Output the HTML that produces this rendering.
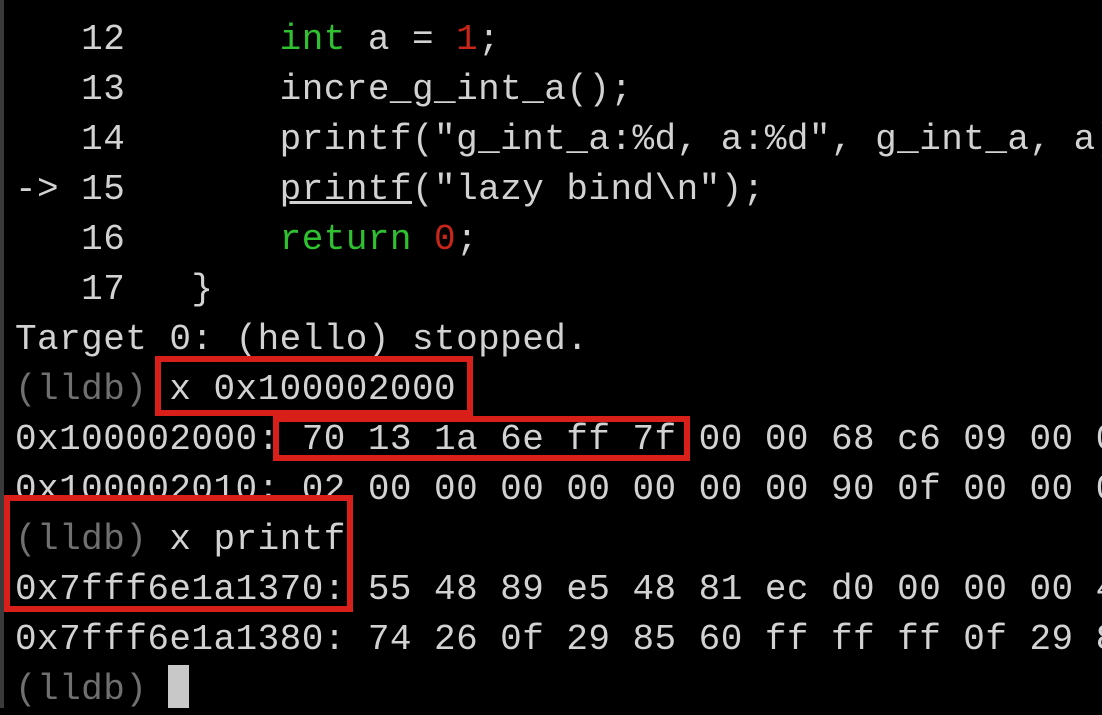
<!DOCTYPE html><html><head><style>
body{margin:0;width:1102px;height:708px;background:#000;overflow:hidden;position:relative;font-family:"Liberation Mono","DejaVu Sans Mono",monospace;}
.l{position:absolute;left:15px;font-size:36px;letter-spacing:0.45px;line-height:50px;height:50px;white-space:pre;color:#d2d2d2;}
.g{color:#2fc12f}.r{color:#c8261b}.d{color:#707070}.y{color:#c8c832}
.bx{position:absolute;border:6px solid #d81f1a;box-sizing:border-box;}
#bar{position:absolute;left:0;top:0;width:4px;height:708px;background:#3a3a3a}
</style></head><body>
<div id="bar"></div>
<div class="l y" style="top:-37px">:15:9</div>
<div class="l" style="top:15px">   12       <span class="g">int</span> a = <span class="r">1</span>;</div>
<div class="l" style="top:65px">   13       incre_g_int_a();</div>
<div class="l" style="top:115px">   14       printf("g_int_a:%d, a:%d", g_int_a, a);</div>
<div class="l" style="top:165px">-> 15       <u>printf</u>("lazy bind\n");</div>
<div class="l" style="top:215px">   16       <span class="g">return</span> <span class="r">0</span>;</div>
<div class="l" style="top:265px">   17   }</div>
<div class="l" style="top:315px">Target 0: (hello) stopped.</div>
<div class="l" style="top:365px"><span class="d">(lldb)</span> x 0x100002000</div>
<div class="l" style="top:415px">0x100002000: 70 13 1a 6e ff 7f 00 00 68 c6 09 00 00</div>
<div class="l" style="top:465px">0x100002010: 02 00 00 00 00 00 00 00 90 0f 00 00 00</div>
<div class="l" style="top:515px"><span class="d">(lldb)</span> x printf</div>
<div class="l" style="top:565px">0x7fff6e1a1370: 55 48 89 e5 48 81 ec d0 00 00 00 48</div>
<div class="l" style="top:615px">0x7fff6e1a1380: 74 26 0f 29 85 60 ff ff ff 0f 29 8d</div>
<div class="l" style="top:665px"><span class="d">(lldb)</span> </div>
<div style="position:absolute;left:168px;top:665px;width:21px;height:43px;background:#c8c8c8"></div>
<div class="bx" style="left:155px;top:356px;width:318px;height:60px"></div>
<div class="bx" style="left:273px;top:416px;width:417px;height:45px"></div>
<div class="bx" style="left:4px;top:495px;width:349px;height:117px"></div>
</body></html>
